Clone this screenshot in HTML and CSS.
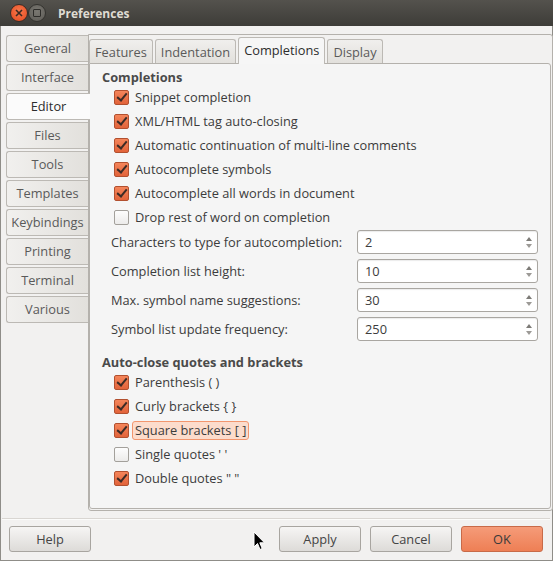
FILE: index.html
```html
<!DOCTYPE html>
<html>
<head>
<meta charset="utf-8">
<link rel="stylesheet" href="styles.css">
</head>
<body>
<div class="window">
  <div class="titlebar">
    <span class="tb-btn tb-close"><svg width="8" height="8" viewBox="0 0 8 8"><path d="M1 1L7 7M7 1L1 7" stroke="#3a2a22" stroke-width="1.6"/></svg></span>
    <span class="tb-btn tb-min"><span class="sq"></span></span>
    <span class="title">Preferences</span>
  </div>
  <div class="body">
    <div class="outer">
      <div class="vtabs">
        <div class="vtab">General</div>
        <div class="vtab">Interface</div>
        <div class="vtab active">Editor</div>
        <div class="vtab">Files</div>
        <div class="vtab">Tools</div>
        <div class="vtab">Templates</div>
        <div class="vtab">Keybindings</div>
        <div class="vtab">Printing</div>
        <div class="vtab">Terminal</div>
        <div class="vtab">Various</div>
      </div>
      <div class="panel">
        <div class="htabs">
          <div class="htab">Features</div>
          <div class="htab">Indentation</div>
          <div class="htab active">Completions</div>
          <div class="htab">Display</div>
        </div>
        <div class="page">
          <div class="heading">Completions</div>
          <div class="chk on"><span class="box"></span><span class="lbl">Snippet completion</span></div>
          <div class="chk on"><span class="box"></span><span class="lbl">XML/HTML tag auto-closing</span></div>
          <div class="chk on"><span class="box"></span><span class="lbl">Automatic continuation of multi-line comments</span></div>
          <div class="chk on"><span class="box"></span><span class="lbl">Autocomplete symbols</span></div>
          <div class="chk on"><span class="box"></span><span class="lbl">Autocomplete all words in document</span></div>
          <div class="chk"><span class="box"></span><span class="lbl">Drop rest of word on completion</span></div>
          <div class="spins">
            <div class="spin"><span class="slbl">Characters to type for autocompletion:</span><span class="entry">2<span class="arrows"><i class="up"></i><i class="dn"></i></span></span></div>
            <div class="spin"><span class="slbl">Completion list height:</span><span class="entry">10<span class="arrows"><i class="up"></i><i class="dn"></i></span></span></div>
            <div class="spin"><span class="slbl">Max. symbol name suggestions:</span><span class="entry">30<span class="arrows"><i class="up"></i><i class="dn"></i></span></span></div>
            <div class="spin"><span class="slbl">Symbol list update frequency:</span><span class="entry">250<span class="arrows"><i class="up"></i><i class="dn"></i></span></span></div>
          </div>
          <div class="heading h2">Auto-close quotes and brackets</div>
          <div class="chk on"><span class="box"></span><span class="lbl">Parenthesis ( )</span></div>
          <div class="chk on"><span class="box"></span><span class="lbl">Curly brackets { }</span></div>
          <div class="chk on"><span class="box"></span><span class="lbl focus">Square brackets [ ]</span></div>
          <div class="chk"><span class="box"></span><span class="lbl">Single quotes ' '</span></div>
          <div class="chk on"><span class="box"></span><span class="lbl">Double quotes " "</span></div>
        </div>
      </div>
    </div>
    <div class="sep"></div>
    <div class="buttons">
      <div class="btn">Help</div>
      <div class="spacer"></div>
      <div class="btn">Apply</div>
      <div class="btn">Cancel</div>
      <div class="btn ok">OK</div>
    </div>
  </div>
  <svg class="cursor" width="13" height="20" viewBox="0 0 13 20"><path d="M1 1L1 16L4.5 12.5L7 18.5L9.2 17.5L6.8 11.8L11.5 11.8Z" fill="#000" stroke="#fff" stroke-width="1" stroke-linejoin="round"/></svg>
</div>
</body>
</html>
```

FILE: styles.css
```css
* { box-sizing: border-box; }
html, body { margin: 0; padding: 0; }
body {
  width: 553px;
  height: 561px;
  background: #f2f1f0;
  font-family: "Open Sans", "Noto Sans", sans-serif;
  font-size: 12.8px;
  color: #3c3c3c;
  overflow: hidden;
}
.window {
  position: relative;
  width: 553px;
  height: 561px;
  border: 1px solid #8f8d88;
  border-top: none;
  background: #f2f1f0;
}
.titlebar {
  height: 26px;
  margin: 0 -1px;
  background: linear-gradient(#54524d, #3d3c38);
  display: flex;
  align-items: center;
  padding-left: 10px;
}
.tb-btn {
  width: 18px;
  height: 18px;
  border-radius: 50%;
  display: flex;
  align-items: center;
  justify-content: center;
}
.tb-close {
  background: radial-gradient(circle at 50% 40%, #f8784c, #e2491f);
  border: 1px solid #3a2c26;
}
.tb-min {
  background: radial-gradient(circle at 50% 40%, #7a7872, #5c5a55);
  border: 1px solid #34332f;
}
.tb-min .sq {
  width: 8px;
  height: 8px;
  border: 1.5px solid #2e2d2a;
  border-radius: 1px;
}
.title {
  margin-left: 12px;
  color: #dfdbd2;
  font-weight: bold;
  font-size: 12px;
}
.body {
  padding: 8px 1px 0 5px;
}
.outer {
  display: flex;
  height: 477px;
}
.vtabs {
  width: 83px;
  display: flex;
  flex-direction: column;
  gap: 2px;
  padding-top: 1px;
  position: relative;
  z-index: 2;
}
.vtab {
  height: 27px;
  width: 82px;
  border: 1px solid #bcb9b4;
  border-right: none;
  border-radius: 3px 0 0 3px;
  background: linear-gradient(90deg, #f1f0ee, #e2e0dc);
  display: flex;
  align-items: center;
  justify-content: center;
  padding-bottom: 2px;
  color: #5a5a5a;
}
.vtab.active {
  width: 84px;
  background: #fbfbfb;
  color: #2d2d2d;
}
.panel {
  flex: 1;
  margin-left: -1px;
  border: 1px solid #b4b1ac;
  border-radius: 0 3px 3px 3px;
  background: #f2f1f0;
  display: flex;
  flex-direction: column;
  padding: 0 1px 1px 0;
}
.htabs {
  display: flex;
  gap: 2px;
  height: 28px;
  align-items: flex-end;
  position: relative;
  z-index: 2;
}
.htab {
  height: 24px;
  border: 1px solid #bcb9b4;
  border-bottom: none;
  border-radius: 3px 3px 0 0;
  background: linear-gradient(#f0efed, #e2e0dc);
  padding: 0 5px;
  display: flex;
  align-items: center;
  color: #5a5a5a;
}
.htab.active {
  height: 27px;
  background: #f6f6f6;
  color: #2d2d2d;
  padding: 0 5px 2px;
  margin-bottom: -1px;
}
.page {
  flex: 1;
  border: 1px solid #b4b1ac;
  border-radius: 0 3px 3px 3px;
  background: #f5f5f5;
  padding: 5px 12px 0 12px;
}
.heading {
  height: 16px;
  line-height: 17px;
  font-weight: bold;
  color: #4a4a4a;
}
.heading.h2 { margin-top: 13px; }
.chk {
  height: 24px;
  display: flex;
  align-items: center;
  padding-left: 12px;
}
.box {
  width: 15px;
  height: 15px;
  border: 1px solid #a3a09b;
  border-radius: 2px;
  background: linear-gradient(#fdfdfd, #ecebea);
  margin-right: 6px;
  position: relative;
}
.chk.on .box {
  background: linear-gradient(#f4855a, #e2633a);
  border-color: #b2502f;
}
.chk.on .box::after {
  content: "";
  position: absolute;
  left: 4px;
  top: 0px;
  width: 4px;
  height: 8px;
  border: solid #3b2b26;
  border-width: 0 2.5px 2.5px 0;
  transform: rotate(40deg);
}
.lbl { padding: 0 2px; border: 1px solid transparent; margin-left: -3px; line-height: 17px; }
.lbl.focus {
  background: #fcdccc;
  border-color: #f2966e;
  border-radius: 3px;
}
.spins {
  margin-top: 1px;
  display: flex;
  flex-direction: column;
  gap: 5px;
  padding-left: 9px;
}
.spin {
  height: 24px;
  display: flex;
  align-items: center;
}
.slbl { width: 246px; }
.entry {
  position: relative;
  width: 181px;
  height: 24px;
  border: 1px solid #a9a6a1;
  border-radius: 3px;
  background: #fff;
  padding-left: 7px;
  display: flex;
  align-items: center;
  box-shadow: inset 0 1px 1px rgba(0,0,0,0.08);
}
.arrows {
  position: absolute;
  right: 0;
  top: 0;
  bottom: 0;
  width: 16px;
  display: flex;
  flex-direction: column;
  align-items: center;
  justify-content: center;
  gap: 3px;
}
.arrows i {
  width: 0;
  height: 0;
  border-left: 3px solid transparent;
  border-right: 3px solid transparent;
}
.arrows .up { border-bottom: 4px solid #7d7b77; }
.arrows .dn { border-top: 4px solid #9c9a96; }
.sep {
  background: #d9d6d2;
  margin: 7px 1px 0 -4px;
  border-bottom: 1px solid #fbfbfa;
  height: 2px;
}
.buttons {
  display: flex;
  gap: 9px;
  padding: 6px 8px 0 3px;
}
.spacer { flex: 1; }
.btn {
  width: 82px;
  height: 26px;
  border: 1px solid #a8a5a0;
  border-radius: 3px;
  background: linear-gradient(#f6f5f4, #dddbd8);
  display: flex;
  align-items: center;
  justify-content: center;
  color: #444;
}
.btn.ok {
  background: linear-gradient(#f59b79, #ee7f55);
  border-color: #c86a48;
  color: #3a3a3a;
}
.cursor {
  position: absolute;
  left: 252px;
  top: 531px;
}
```
